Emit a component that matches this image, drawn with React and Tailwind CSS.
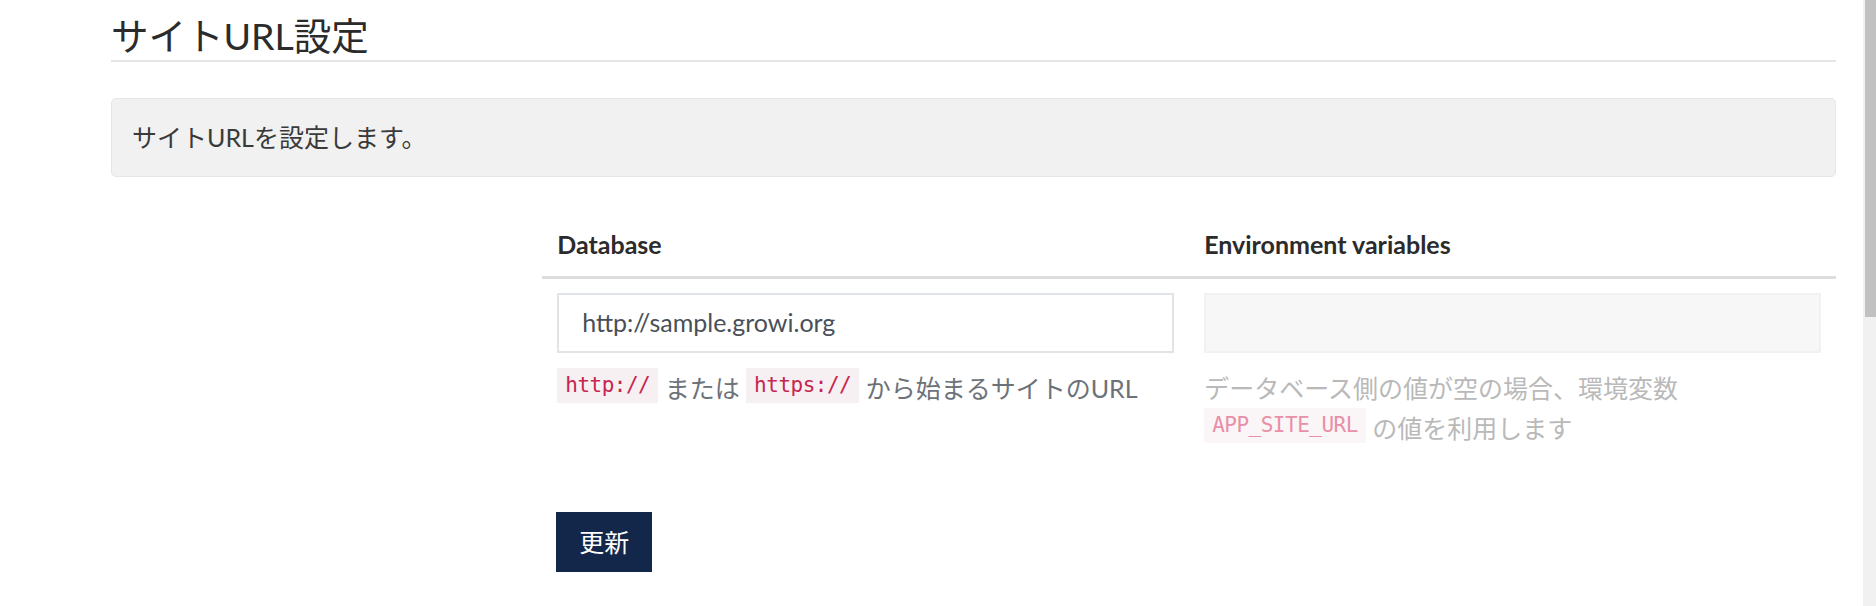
export default function App() {
  return (
    <div
      className="flex h-[606px] w-full overflow-hidden bg-white text-[#333333] font-['Lato','Noto_Sans_CJK_JP',sans-serif]"
    >
      <div className="flex-1 pl-[111px] pr-[27px]">
        <h2 className="mt-[13px] border-b-2 border-[#e5e5e5] pb-[2px] text-[37.5px] font-normal leading-[45px] text-[#2b2b2b]">
          サイトURL設定
        </h2>

        <div className="mt-[36px] rounded-[5px] border border-[#e6e6e6] bg-[#f1f1f1] px-[20px] py-[20px] text-[25px] leading-[37px] text-[#3a3a3a]">
          サイトURLを設定します。
        </div>

        <div className="mt-[32px] grid grid-cols-4">
          <div className="col-span-3 col-start-2">
            <div className="grid grid-cols-2 border-b-[3px] border-[#dddddd]">
              <div className="px-[15px] pb-[13px] pt-[17px] text-[25px] font-bold leading-[37px] text-[#2b2b2b]">
                Database
              </div>
              <div className="px-[15px] pb-[13px] pt-[17px] text-[25px] font-bold leading-[37px] text-[#2b2b2b]">
                Environment variables
              </div>
            </div>

            <div className="grid grid-cols-2">
              <div className="px-[15px] pt-[14px]">
                <div className="flex h-[60px] items-center border-2 border-[#e0e4e8] bg-white px-[23px] text-[25px] text-[#495057]">
                  http://sample.growi.org
                </div>
                <p className="mt-[15px] text-[25px] leading-[40px] text-[#6c727a]">
                  <code className="inline-block h-[35px] bg-[#f7f0f3] px-[8px] align-top font-['DejaVu_Sans_Mono',monospace] text-[21px] tracking-[-0.5px] leading-[35px] text-[#c7254e]">
                    http://
                  </code>{" "}
                  または{" "}
                  <code className="inline-block h-[35px] bg-[#f7f0f3] px-[8px] align-top font-['DejaVu_Sans_Mono',monospace] text-[21px] tracking-[-0.5px] leading-[35px] text-[#c7254e]">
                    https://
                  </code>{" "}
                  から始まるサイトのURL
                </p>
              </div>
              <div className="px-[15px] pt-[14px]">
                <div className="h-[60px] border-2 border-[#f1f1f1] bg-[#f7f7f7]" />
                <p className="mt-[15px] text-[25px] leading-[40px] text-[#b9b9b9]">
                  データベース側の値が空の場合、環境変数
                  <br />
                  <code className="inline-block h-[35px] bg-[#faf6f7] px-[8px] align-top font-['DejaVu_Sans_Mono',monospace] text-[21px] tracking-[-0.5px] leading-[35px] text-[#e98fa8]">
                    APP_SITE_URL
                  </code>{" "}
                  の値を利用します
                </p>
              </div>
            </div>

            <div className="mt-[64px] pl-[14px]">
              <button className="h-[60px] bg-[#13274a] px-[23px] text-[25px] leading-[60px] text-white">
                更新
              </button>
            </div>
          </div>
        </div>
      </div>

      <div className="w-[13px] bg-[#f1f1f1]">
        <div className="ml-[2px] h-[317px] bg-[#c1c1c1]" />
      </div>
    </div>
  );
}
